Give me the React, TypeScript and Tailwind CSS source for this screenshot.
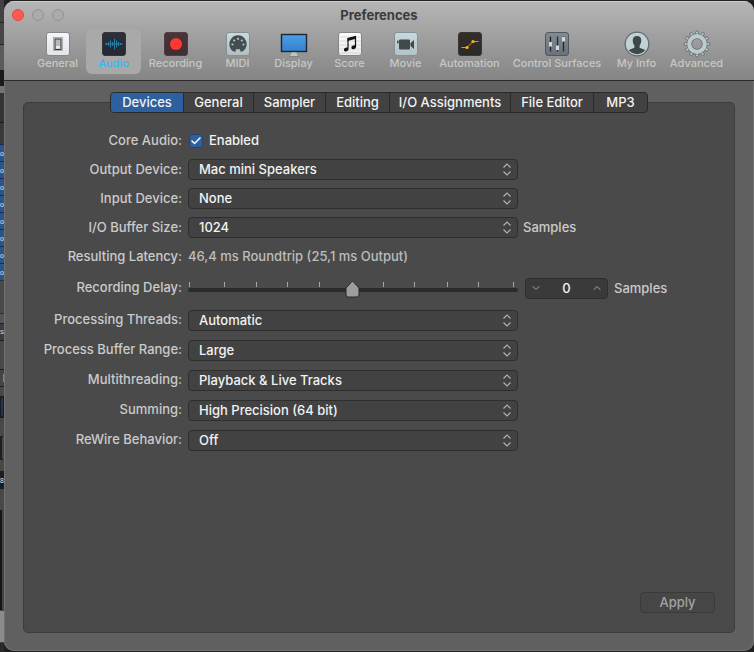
import { useState } from 'react';
import type { ReactNode } from 'react';
import { Check, ChevronDown, ChevronUp } from 'lucide-react';
import clsx from 'clsx';

function Tile({ from, to, edge, children }: { from: string; to: string; edge: string; children: ReactNode }) {
    const id = `tile-${from.slice(1)}`;
    return (
        <svg viewBox="0 0 28 28" className="-mb-px size-7" aria-hidden="true">
            <defs>
                <linearGradient id={id} x1="0" y1="0" x2="0" y2="1">
                    <stop offset="0" stopColor={from} />
                    <stop offset="1" stopColor={to} />
                </linearGradient>
            </defs>
            <rect x="2.5" y="2.5" width="23" height="23" rx="2.5" fill={`url(#${id})`} stroke={edge} />
            {children}
        </svg>
    );
}

const GeneralIcon = () => (
    <Tile from="#f4f6fa" to="#e2e5ea" edge="#85868a">
        <rect x="9.5" y="7.5" width="9" height="13" fill="#d5d8db" stroke="#a0a0a0" strokeWidth="0.8" />
        <rect x="11" y="9" width="6" height="10.500" fill="#b5b9bc" stroke="#3a3a3a" strokeWidth="1" />
        <rect x="12" y="16" width="4" height="2.5" fill="#e9ebed" />
    </Tile>
);

const AudioIcon = () => (
    <Tile from="#2b303b" to="#232832" edge="#31353c">
        <path
            d="M6.500 13v2M8.500 12v4M10.500 10.500v7M12.500 12v4M14.500 8.500v11M16.500 10.500v7M18.500 12v4M20.500 13v2M5 14h18"
            stroke="#2b86ab"
            strokeWidth="0.9"
            fill="none"
        />
    </Tile>
);

const RecordingIcon = () => (
    <Tile from="#493438" to="#402e32" edge="#533b3f">
        <circle cx="14" cy="14" r="6" fill="#ff382f" />
    </Tile>
);

const MidiIcon = () => (
    <Tile from="#cadade" to="#b0c0c2" edge="#849194">
        <path d="M9.500 21.500a8.700 8.700 0 1 1 9 0h-2.300v-2.200h-4.400v2.200z" fill="#454d50" />
        <circle cx="8.500" cy="14.500" r="1.100" fill="#b8c8cb" />
        <circle cx="19.500" cy="14.500" r="1.100" fill="#b8c8cb" />
        <circle cx="10.200" cy="10.500" r="1.100" fill="#b8c8cb" />
        <circle cx="17.800" cy="10.500" r="1.100" fill="#b8c8cb" />
        <circle cx="14" cy="8.800" r="1.100" fill="#b8c8cb" />
    </Tile>
);

const DisplayIcon = () => (
    <svg viewBox="0 0 28 28" className="-mb-px size-7" aria-hidden="true">
        <defs>
            <linearGradient id="screen" x1="0" y1="0" x2="0" y2="1">
                <stop offset="0" stopColor="#4b9fe6" />
                <stop offset="1" stopColor="#3480cd" />
            </linearGradient>
        </defs>
        <path d="M11.500 22h5l.5 3 2 1.500h-10l2-1.500z" fill="#c3c3c3" />
        <path d="M9 26.500h10" stroke="#777" strokeWidth="0.8" />
        <rect x="1.500" y="4.500" width="25" height="17" fill="url(#screen)" stroke="#20262c" strokeWidth="1.400" />
    </svg>
);

const ScoreIcon = () => (
    <Tile from="#fbfbfb" to="#ececec" edge="#858585">
        <path d="M3 7h22M3 11h22M3 15h22M3 19h22M3 23h22" stroke="#cfcfcf" strokeWidth="0.7" />
        <path d="M12 18.500V8.500l7.500-2V17" stroke="#111" strokeWidth="1.200" fill="none" />
        <path d="M11.500 8.500l8.500-2.300v2.600L11.500 11z" fill="#111" />
        <ellipse cx="10.200" cy="19.500" rx="2.400" ry="1.900" fill="#111" transform="rotate(-18 10.200 19.500)" />
        <ellipse cx="17.700" cy="17.300" rx="2.400" ry="1.900" fill="#111" transform="rotate(-18 17.700 17.300)" />
    </Tile>
);

const MovieIcon = () => (
    <Tile from="#c9dadf" to="#b1c3c6" edge="#849195">
        <rect x="7" y="9.500" width="11" height="10" rx="1" fill="#42494b" />
        <path d="M18.500 13l3.500-3v9l-3.500-3z" fill="#42494b" />
        <path d="M5.700 10.500v3M5.500 12H7" stroke="#42494b" strokeWidth="1.200" />
    </Tile>
);

const AutomationIcon = () => (
    <Tile from="#332e29" to="#2d2924" edge="#3c3732">
        <path d="M5.500 17.500H11L17 11.500H22.500" stroke="#d99b18" strokeWidth="1" fill="none" />
        <circle cx="11" cy="17.500" r="1.600" fill="#ffb41c" />
        <circle cx="17" cy="11.500" r="1.600" fill="#ffb41c" />
    </Tile>
);

const SurfacesIcon = () => (
    <Tile from="#818b93" to="#69727a" edge="#50575e">
        <path d="M7.500 6.500v15M14.500 6.500v15M20.500 6.500v15" stroke="#23282c" strokeWidth="1.300" />
        <rect x="6" y="12" width="3" height="4.500" rx="0.500" fill="#d5d8da" />
        <rect x="13" y="15.500" width="3" height="4.500" rx="0.500" fill="#d5d8da" />
        <rect x="19" y="7" width="3" height="4.500" rx="0.500" fill="#d5d8da" />
    </Tile>
);

const InfoIcon = () => (
    <svg viewBox="0 0 28 28" className="-mb-px size-7" aria-hidden="true">
        <circle cx="14" cy="14" r="11.800" fill="#c2d1d5" stroke="#626c6f" strokeWidth="1.300" />
        <path
            d="M14 6c3.300 0 4.500 2.200 4.200 5.200-.2 2-.9 3.500-1.600 4.400v2.200l5.700 2.200a10.300 10.300 0 0 1-16.600 0l5.700-2.200v-2.200c-.7-.9-1.400-2.400-1.600-4.400C9.500 8.200 10.700 6 14 6z"
            fill="#3e4749"
        />
    </svg>
);

const GearIcon = () => (
    <svg viewBox="0 0 28 28" className="-mb-px size-7" aria-hidden="true">
        {Array.from({ length: 12 }, (_, i) => (
            <path key={i} d="M11.800 5.500l1.200-4.300h2l1.200 4.300z" fill="#bdcbcf" stroke="#5e696b" strokeWidth="0.8" transform={`rotate(${i * 30} 14 14)`} />
        ))}
        <circle cx="14" cy="14" r="7.700" fill="none" stroke="#5e696b" strokeWidth="5.600" />
        <circle cx="14" cy="14" r="7.800" fill="none" stroke="#bdcbcf" strokeWidth="4.200" />
    </svg>
);

const sections = [
    { name: 'General', icon: GeneralIcon, width: 'w-[55px]' },
    { name: 'Audio', icon: AudioIcon, width: 'w-[55px]' },
    { name: 'Recording', icon: RecordingIcon, width: 'w-[67px]' },
    { name: 'MIDI', icon: MidiIcon, width: 'w-[55px]' },
    { name: 'Display', icon: DisplayIcon, width: 'w-[55px]' },
    { name: 'Score', icon: ScoreIcon, width: 'w-[55px]' },
    { name: 'Movie', icon: MovieIcon, width: 'w-[55px]' },
    { name: 'Automation', icon: AutomationIcon, width: 'w-[71px]' },
    { name: 'Control Surfaces', icon: SurfacesIcon, width: 'w-[102px]' },
    { name: 'My Info', icon: InfoIcon, width: 'w-[55px]' },
    { name: 'Advanced', icon: GearIcon, width: 'w-[63px]' },
];

const tabs = [
    { name: 'Devices', width: 'w-[73px]' },
    { name: 'General', width: 'w-[70px]' },
    { name: 'Sampler', width: 'w-[72px]' },
    { name: 'Editing', width: 'w-[64px]' },
    { name: 'I/O Assignments', width: 'w-[121px]' },
    { name: 'File Editor', width: 'w-[83px]' },
    { name: 'MP3', width: 'w-[53px]' },
];

const tickMarks = [1, 36, 68, 99, 131, 163, 195, 226, 259, 290, 325];

interface RowProps {
    label: string;
    htmlFor?: string;
    height?: string;
    children: ReactNode;
}

function Row({ label, htmlFor, height = 'h-[30px]', children }: RowProps) {
    return (
        <div className={clsx('grid grid-cols-[158px_1fr] items-center gap-1.5', height)}>
            <label htmlFor={htmlFor} className="pb-0.5 text-right whitespace-nowrap">
                {label}
            </label>
            <div className="flex items-center">{children}</div>
        </div>
    );
}

function Popup({ id, options }: { id: string; options: string[] }) {
    return (
        <div className="relative w-[330px]">
            <select
                id={id}
                className="block h-[21px] w-full appearance-none rounded border border-[#2e2e2e] bg-[#424242] pr-6 pl-2.5 leading-[19px] text-[#f2f2f2] outline-none"
            >
                {options.map((option) => (
                    <option key={option}>{option}</option>
                ))}
            </select>
            <svg
                viewBox="0 0 10 13"
                className="pointer-events-none absolute top-1 right-1.5 h-[13px] w-2.5"
                fill="none"
                stroke="#b4b4b4"
                strokeWidth="1.1"
                aria-hidden="true"
            >
                <path d="M1.500 4.500L5 1l3.500 3.500M1.500 8.500L5 12l3.500-3.500" />
            </svg>
        </div>
    );
}

function DelaySlider() {
    const [value, setValue] = useState(50);

    return (
        <div className="relative h-5 w-[330px]">
            <svg viewBox="0 0 330 20" className="absolute inset-0 size-full" aria-hidden="true">
                {tickMarks.map((x) => (
                    <rect key={x} x={x} y="4" width="1" height="5" fill="#a6a6a6" />
                ))}
                <rect y="10" width="330" height="4" rx="2" fill="#2b2b2b" />
                <path
                    d="M0 3.500Q.8 3.500 1.500 4.500L6.500 10V16.500Q6.500 19 4.500 19H-4.500Q-6.500 19 -6.500 16.500V10L-1.500 4.500Q-.8 3.500 0 3.500Z"
                    fill="#9d9d9d"
                    stroke="#282828"
                    transform={`translate(${6.5 + value * 3.16} 0)`}
                />
            </svg>
            <input
                id="delay"
                type="range"
                min={0}
                max={100}
                value={value}
                onChange={(e) => setValue(Number(e.target.value))}
                className="absolute inset-0 size-full opacity-0"
            />
        </div>
    );
}

/* Sliver of the main window that shows past the left edge */
function Backdrop() {
    return (
        <div
            className="flex w-1 shrink-0 flex-col font-['Liberation_Sans',sans-serif] text-[7px] leading-none text-[#e0e0e0]"
            aria-hidden="true"
        >
            <div className="h-[22px] bg-[#424242]" />
            <div className="h-[23px] border-y border-[#252525] bg-[#464646]" />
            <div className="h-[25px] bg-[#5b5b5b]" />
            <div className="h-4 bg-[#191919]" />
            <div className="h-[7px] bg-[#737373]" />
            <div className="h-[29px] bg-[#343434]" />
            <div className="h-[22px] border-t border-[#191919] bg-[#393939]" />
            {Array.from({ length: 8 }, (_, i) => (
                <div key={i} className="flex h-[17px] items-center border-t border-[#1c2d45] bg-[#2c548c]">
                    o
                </div>
            ))}
            <div className="h-[34px] border-y border-[#303030] bg-[#4a4a4a]" />
            <div className="h-[9px] bg-[#555555]" />
            <div className="flex h-[18px] items-center border-y border-[#202020] bg-[#3c3c3c] text-[6px]">S</div>
            <div className="h-[28px] bg-[#484848]" />
            <div className="flex h-[18px] items-center justify-end border-y border-[#202020] bg-[#444444]">
                <span className="h-2 w-px bg-[#3fae4d]" />
            </div>
            <div className="h-[9px] bg-[#484848]" />
            <div className="h-[22px] rounded-l border border-[#171c24] bg-[#26364d]" />
            <div className="h-[18px] bg-[#484848]" />
            <div className="h-6 rounded-l-full border-l-2 border-[#1f1f1f] bg-[#484848]" />
            <div className="h-[11px] bg-[#484848]" />
            <div className="flex h-[18px] items-center bg-[#1d1d1d]">8</div>
            <div className="h-[21px] bg-[#484848]" />
            <div className="h-[100px] border-r-2 border-[#444444] bg-[#161616]" />
            <div className="h-[33px] border-y border-[#454545] bg-[#8b8b8b]" />
            <div className="flex-1 bg-[#2a2a2a]" />
        </div>
    );
}

export default function App() {
    const [section, setSection] = useState('Audio');
    const [tab, setTab] = useState('Devices');
    const [enabled, setEnabled] = useState(true);
    const [delay, setDelay] = useState(0);

    return (
        <div className="flex min-h-screen bg-[#202020] font-['Inter','Liberation_Sans',sans-serif] text-[13px] leading-4 font-medium text-[#cbcbcb]">
            <Backdrop />
            <main className="my-px flex min-w-0 flex-1 flex-col overflow-hidden rounded-[10px] bg-[#606060] shadow-[inset_0_0_0_1px_#727272]">
                <header className="h-20 border-b border-[#2b2b2b] bg-linear-to-b from-[#b6b6b6] to-[#858585] shadow-[inset_0_1px_0_#cdcdcd]">
                    <div className="grid h-7 grid-cols-[1fr_auto_1fr] items-center px-2">
                        <div className="flex gap-2">
                            <button aria-label="Close" className="size-3 rounded-full border border-[#df4940] bg-[#ff5a52]" />
                            <button aria-label="Minimize" className="size-3 rounded-full border border-[#929292] bg-[#aaaaaa]" />
                            <button aria-label="Zoom" className="size-3 rounded-full border border-[#929292] bg-[#aaaaaa]" />
                        </div>
                        <h1 className="text-[13px] font-bold text-[#3b3b3b]">Preferences</h1>
                    </div>
                    <nav className="flex gap-px pl-[26px]">
                        {sections.map(({ name, icon: Icon, width }) => (
                            <button
                                key={name}
                                onClick={() => setSection(name)}
                                className={clsx(
                                    'flex h-[45px] shrink-0 flex-col items-center rounded-md pt-px text-[11px] leading-3 whitespace-nowrap',
                                    width,
                                    section === name ? 'bg-[#a9a9a9] text-[#2bbcf5]' : 'text-[#c7c7c7]'
                                )}
                            >
                                <Icon />
                                {name}
                            </button>
                        ))}
                    </nav>
                </header>

                <div className="flex flex-1 flex-col px-[19px] pt-[11px] pb-[18px]">
                    <div role="tablist" className="z-10 -mb-[11px] flex self-center overflow-hidden rounded border border-[#2a2a2a] bg-[#424242]">
                        {tabs.map(({ name, width }) => (
                            <button
                                key={name}
                                role="tab"
                                aria-selected={tab === name}
                                onClick={() => setTab(name)}
                                className={clsx(
                                    'h-[19px] border-r border-[#2a2a2a] leading-[19px] whitespace-nowrap text-[#f2f2f2] last:border-r-0',
                                    width,
                                    tab === name && 'bg-[#2d609e]'
                                )}
                            >
                                {name}
                            </button>
                        ))}
                    </div>

                    <section className="flex flex-1 flex-col rounded-[5px] border border-[#3c3c3c] bg-[#4a4a4a] pt-[23px] pr-[19px] pb-[19px]">
                        <Row label="Core Audio:" htmlFor="core-audio" height="h-[29px]">
                            <span className="relative ml-px size-[14px]">
                                <input
                                    id="core-audio"
                                    type="checkbox"
                                    checked={enabled}
                                    onChange={(e) => setEnabled(e.target.checked)}
                                    className="block size-[14px] appearance-none rounded-[3px] border border-[#27466d] bg-[#424242] checked:bg-[#2d609e]"
                                />
                                {enabled && (
                                    <Check className="pointer-events-none absolute inset-px size-3 text-white" strokeWidth={3} />
                                )}
                            </span>
                            <label htmlFor="core-audio" className="ml-1.5 pb-0.5 text-[#f2f2f2]">
                                Enabled
                            </label>
                        </Row>
                        <Row label="Output Device:" htmlFor="output" height="h-[29px]">
                            <Popup id="output" options={['Mac mini Speakers']} />
                        </Row>
                        <Row label="Input Device:" htmlFor="input" height="h-[29px]">
                            <Popup id="input" options={['None']} />
                        </Row>
                        <Row label="I/O Buffer Size:" htmlFor="buffer" height="h-[29px]">
                            <Popup id="buffer" options={['1024']} />
                            <span className="ml-[5px] pb-0.5">Samples</span>
                        </Row>
                        <Row label="Resulting Latency:" htmlFor="latency" height="h-[29px]">
                            <output id="latency" className="pb-0.5 text-[#bdbdbd]">
                                46,4 ms Roundtrip (25,1 ms Output)
                            </output>
                        </Row>
                        <Row label="Recording Delay:" htmlFor="delay" height="h-[34px]">
                            <DelaySlider />
                            <div className="ml-[7px] flex h-[21px] w-[83px] items-center rounded border border-[#2e2e2e] bg-[#3a3a3a] px-1">
                                <button aria-label="Decrease" onClick={() => setDelay(delay - 1)}>
                                    <ChevronDown className="size-3 text-[#a8a8a8]" />
                                </button>
                                <input
                                    aria-label="Delay in samples"
                                    value={delay}
                                    onChange={(e) => setDelay(Number(e.target.value) || 0)}
                                    className="w-full min-w-0 bg-transparent text-center text-[#f2f2f2] outline-none"
                                />
                                <button aria-label="Increase" onClick={() => setDelay(delay + 1)}>
                                    <ChevronUp className="size-3 text-[#a8a8a8]" />
                                </button>
                            </div>
                            <span className="ml-1.5">Samples</span>
                        </Row>
                        <Row label="Processing Threads:" htmlFor="threads">
                            <Popup id="threads" options={['Automatic']} />
                        </Row>
                        <Row label="Process Buffer Range:" htmlFor="range">
                            <Popup id="range" options={['Large', 'Medium', 'Small']} />
                        </Row>
                        <Row label="Multithreading:" htmlFor="multithreading">
                            <Popup id="multithreading" options={['Playback & Live Tracks']} />
                        </Row>
                        <Row label="Summing:" htmlFor="summing">
                            <Popup id="summing" options={['High Precision (64 bit)']} />
                        </Row>
                        <Row label="ReWire Behavior:" htmlFor="rewire">
                            <Popup id="rewire" options={['Off']} />
                        </Row>

                        <button className="mt-auto h-[21px] w-[75px] self-end rounded border border-[#3a3a3a] bg-[#464646] leading-[19px] text-[#a3a3a3]">
                            Apply
                        </button>
                    </section>
                </div>
            </main>
        </div>
    );
}
